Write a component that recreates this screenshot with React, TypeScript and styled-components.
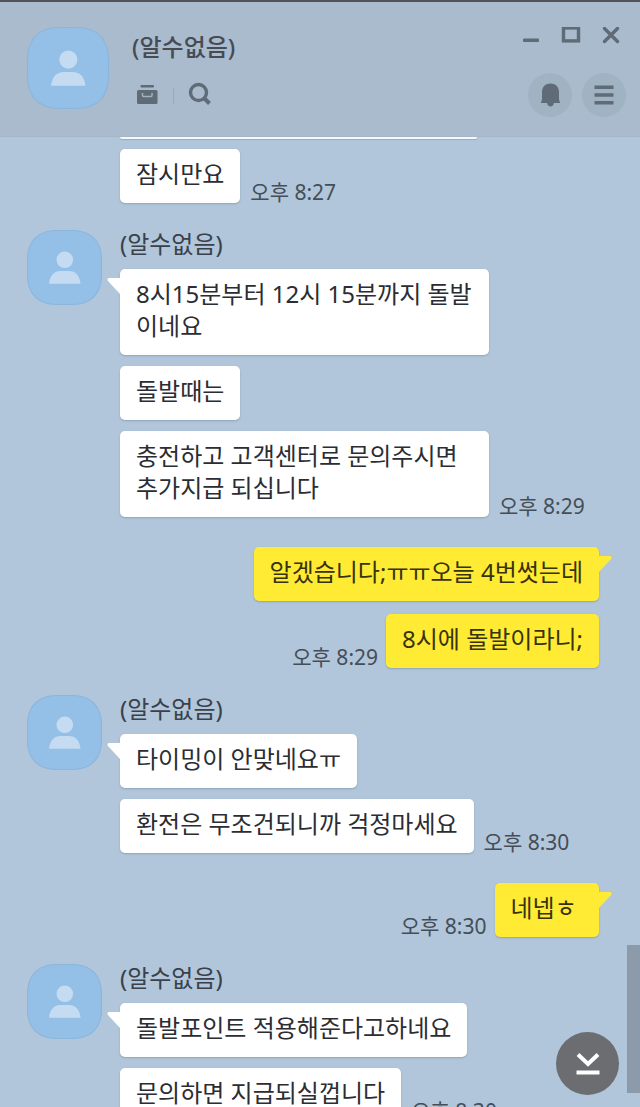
import React from "react";
import styled, { createGlobalStyle } from "styled-components";

const GlobalStyle = createGlobalStyle`
  *, *::before, *::after { box-sizing: border-box; }
  body {
    margin: 0;
    background: #b1c6da;
    font-family: "Noto Sans", "Noto Sans CJK KR", sans-serif;
  }
  button { padding: 0; border: 0; background: none; color: inherit; font: inherit; cursor: pointer; }
  svg { display: block; }
`;

const Window = styled.div`
  display: flex;
  flex-direction: column;
  height: 100vh;
  overflow: hidden;
  background: #b1c6da;
`;

const Header = styled.header`
  display: flex;
  flex: none;
  align-items: flex-start;
  height: 137px;
  padding: 25px 14px 0 27px;
  border-top: 2px solid #50525a;
  border-bottom: 1px solid #a4b6c8;
  background: #a9bbcd;
  color: #5f6b76;
`;

const HeaderInfo = styled.div`
  display: flex;
  flex: 1;
  flex-direction: column;
  gap: 17px;
  min-width: 0;
  padding: 2px 0 0 23px;
`;

const Title = styled.h1`
  margin: 0;
  color: #464b54;
  font-size: 24px;
  font-weight: 500;
  line-height: 36px;
`;

const Tools = styled.div`
  display: flex;
  align-items: center;
  gap: 14px;
  padding-left: 3px;
`;

const ToolDivider = styled.span`
  width: 1px;
  height: 16px;
  margin-top: 4px;
  background: #98a9ba;
`;

const HeaderActions = styled.div`
  display: flex;
  flex-direction: column;
  align-items: flex-end;
  gap: 26px;
`;

const WindowControls = styled.div`
  display: flex;
  gap: 20px;
  padding-right: 5px;
`;

const RoundActions = styled.div`
  display: flex;
  gap: 10px;
`;

const IconButton = styled.button`
  display: grid;
  place-items: center;
`;

const RoundButton = styled(IconButton)`
  width: 44px;
  height: 44px;
  border-radius: 50%;
  background: #a0b3c3;
`;

const FeedArea = styled.main`
  position: relative;
  flex: 1;
  min-height: 0;
  overflow: hidden;
`;

const Group = styled.section<{ $mine?: boolean }>`
  display: flex;
  padding: ${(p) => (p.$mine ? "30px 41px 0 27px" : "27px 41px 0 27px")};
`;

const EarlierMessages = styled.div`
  display: flex;
  flex-direction: column;
  gap: 10px;
  padding: 0 41px 0 120px;
`;

const EarlierBubbleEdge = styled.div`
  width: 357px;
  max-width: 100%;
  height: 2px;
  border-radius: 0 0 4px 4px;
  background: #f4f8fc;
  box-shadow: 0 1px 1px #98abbd;
`;

const Stack = styled.div<{ $mine?: boolean }>`
  display: flex;
  flex: 1;
  flex-direction: column;
  gap: ${(p) => (p.$mine ? 13 : 11)}px;
  min-width: 0;
  padding-left: ${(p) => (p.$mine ? 0 : 18)}px;
`;

const Name = styled.div`
  height: 28px;
  color: #3a414b;
  font-size: 24px;
  line-height: 28px;
`;

const Row = styled.div<{ $mine?: boolean }>`
  display: flex;
  flex-direction: ${(p) => (p.$mine ? "row-reverse" : "row")};
  align-items: flex-end;
  gap: ${(p) => (p.$mine ? 8 : 10)}px;
`;

const Bubble = styled.p<{ $mine?: boolean }>`
  position: relative;
  max-width: 369px;
  margin: 0;
  padding: 9px 16px 13px;
  border-radius: 5px;
  background: ${(p) => (p.$mine ? "#ffeb33" : "#ffffff")};
  box-shadow: 0 1px 2px #8fa3b6;
  color: ${(p) => (p.$mine ? "#37330f" : "#2b2d33")};
  font-size: 24px;
  line-height: 32px;
`;

const Tail = styled.svg<{ $mine?: boolean }>`
  position: absolute;
  top: 9px;
  ${(p) => (p.$mine ? "right: -13px;" : "left: -13px; transform: scaleX(-1);")}
  fill: ${(p) => (p.$mine ? "#ffeb33" : "#ffffff")};
`;

const Time = styled.time`
  flex: none;
  color: #454d57;
  font-size: 21px;
  line-height: 22px;
`;

const ScrollThumb = styled.div`
  position: absolute;
  right: 0;
  bottom: 14px;
  width: 13px;
  height: 148px;
  background: #8c9aaa;
`;

const JumpButton = styled(IconButton)`
  position: absolute;
  right: 21px;
  bottom: 12px;
  width: 63px;
  height: 63px;
  border-radius: 50%;
  background: #6c6d71;
`;

const AvatarImage = styled.svg`
  flex: none;
`;

function Avatar({ size }: { size: number }) {
  return (
    <AvatarImage width={size} height={size} viewBox="0 0 74 74" role="img" aria-label="프로필">
      <path
        d="M29 .5H45C63 .5 73.5 11 73.5 29V45C73.5 63 63 73.5 45 73.5H29C11 73.5 .5 63 .5 45V29C.5 11 11 .5 29 .5Z"
        fill="#94bfe7"
        stroke="#8cb5dc"
      />
      <circle cx="37.3" cy="29.4" r="8.2" fill="#c4dbf2" />
      <path d="M21.7 53C22.5 45 27 40.5 33 40.5H41.5C47.5 40.5 52 45 52.8 53Z" fill="#c4dbf2" />
    </AvatarImage>
  );
}

interface Message {
  text: string;
  time?: string;
}

function MessageRow({ text, time, mine, tail }: Message & { mine?: boolean; tail?: boolean }) {
  return (
    <Row $mine={mine}>
      <Bubble $mine={mine}>
        {tail && (
          <Tail $mine={mine} width="14" height="17" viewBox="0 0 14 17" aria-hidden="true">
            <path d="M0 0H12Q14.5 .5 13 3L1 16 0 16Z" />
          </Tail>
        )}
        {text}
      </Bubble>
      {time && <Time>{time}</Time>}
    </Row>
  );
}

function MessageGroup({ messages, mine }: { messages: Message[]; mine?: boolean }) {
  return (
    <Group $mine={mine}>
      {!mine && <Avatar size={75} />}
      <Stack $mine={mine}>
        {!mine && <Name>(알수없음)</Name>}
        {messages.map((message, index) => (
          <MessageRow key={message.text} {...message} mine={mine} tail={index === 0} />
        ))}
      </Stack>
    </Group>
  );
}

const groups: { mine?: boolean; messages: Message[] }[] = [
  {
    messages: [
      { text: "8시15분부터 12시 15분까지 돌발이네요" },
      { text: "돌발때는" },
      { text: "충전하고 고객센터로 문의주시면 추가지급 되십니다", time: "오후 8:29" },
    ],
  },
  {
    mine: true,
    messages: [
      { text: "알겠습니다;ㅠㅠ오늘 4번썻는데" },
      { text: "8시에 돌발이라니;", time: "오후 8:29" },
    ],
  },
  {
    messages: [
      { text: "타이밍이 안맞네요ㅠ" },
      { text: "환전은 무조건되니까 걱정마세요", time: "오후 8:30" },
    ],
  },
  { mine: true, messages: [{ text: "네넵ㅎ\u00a0", time: "오후 8:30" }] },
  {
    messages: [
      { text: "돌발포인트 적용해준다고하네요" },
      { text: "문의하면 지급되실껍니다", time: "오후 8:30" },
    ],
  },
];

export default function App() {
  return (
    <>
      <GlobalStyle />
      <Window>
        <Header>
          <Avatar size={82} />
          <HeaderInfo>
            <Title>(알수없음)</Title>
            <Tools>
              <IconButton type="button" aria-label="보관함">
                <svg width="24" height="24" viewBox="0 0 24 24" fill="currentColor">
                  <rect x="5.5" y="3" width="13.5" height="2.6" rx="1" />
                  <path d="M3.5 8H21Q22.5 8 22.5 9.5V20.5Q22.5 22 21 22H3.5Q2 22 2 20.5V9.5Q2 8 3.5 8Z" />
                  <path d="M7.5 11V13.5Q7.5 14.5 8.500 14.5H16Q17 14.5 17 13.5V11" fill="none" stroke="#a3b1bf" strokeWidth="1.5" />
                </svg>
              </IconButton>
              <ToolDivider />
              <IconButton type="button" aria-label="검색">
                <svg width="24" height="24" viewBox="0 0 24 24" fill="none" stroke="currentColor" strokeWidth="3.4">
                  <circle cx="10.5" cy="10.5" r="8" />
                  <path d="M16 16L21.5 21.5" strokeWidth="4" />
                </svg>
              </IconButton>
            </Tools>
          </HeaderInfo>
          <HeaderActions>
            <WindowControls>
              <IconButton type="button" aria-label="최소화">
                <svg width="20" height="20" viewBox="0 0 20 20">
                  <rect x="2" y="11.5" width="16" height="3.5" rx="1" fill="currentColor" />
                </svg>
              </IconButton>
              <IconButton type="button" aria-label="최대화">
                <svg width="20" height="20" viewBox="0 0 20 20">
                  <rect x="2.5" y="0.9" width="15" height="13" fill="none" stroke="currentColor" strokeWidth="3.4" />
                </svg>
              </IconButton>
              <IconButton type="button" aria-label="닫기">
                <svg width="20" height="20" viewBox="0 0 20 20">
                  <path d="M3.5 1.5L16.5 14.5M16.5 1.5L3.5 14.5" stroke="currentColor" strokeWidth="3.4" strokeLinecap="round" />
                </svg>
              </IconButton>
            </WindowControls>
            <RoundActions>
              <RoundButton type="button" aria-label="알림">
                <svg width="24" height="26" viewBox="0 0 24 26" fill="currentColor">
                  <path d="M12.5 1.5C17.5 1.5 21 4.8 21 10V17Q21.2 19 22.3 21H16Q15 24.5 12.5 24.5T9 21H2.7Q3.8 19 4 17V10C4 4.8 7.5 1.5 12.5 1.5Z" />
                </svg>
              </RoundButton>
              <RoundButton type="button" aria-label="메뉴">
                <svg width="20" height="20" viewBox="0 0 20 20" fill="currentColor">
                  <path d="M.5 0.5H19.5V4H.5ZM.5 8.25H19.5V11.75H.5ZM.5 16H19.5V19.5H.5Z" />
                </svg>
              </RoundButton>
            </RoundActions>
          </HeaderActions>
        </Header>
        <FeedArea>
          <EarlierMessages>
            <EarlierBubbleEdge />
            <MessageRow text="잠시만요" time="오후 8:27" />
          </EarlierMessages>
          {groups.map((group, index) => (
            <MessageGroup key={index} {...group} />
          ))}
          <ScrollThumb />
          <JumpButton type="button" aria-label="맨 아래로">
            <svg width="26" height="26" viewBox="0 0 26 26" fill="none" stroke="#ffffff" strokeWidth="4">
              <path d="M3 3.5L13 13L23 3.5M1.5 21.5H24.5" />
            </svg>
          </JumpButton>
        </FeedArea>
      </Window>
    </>
  );
}
